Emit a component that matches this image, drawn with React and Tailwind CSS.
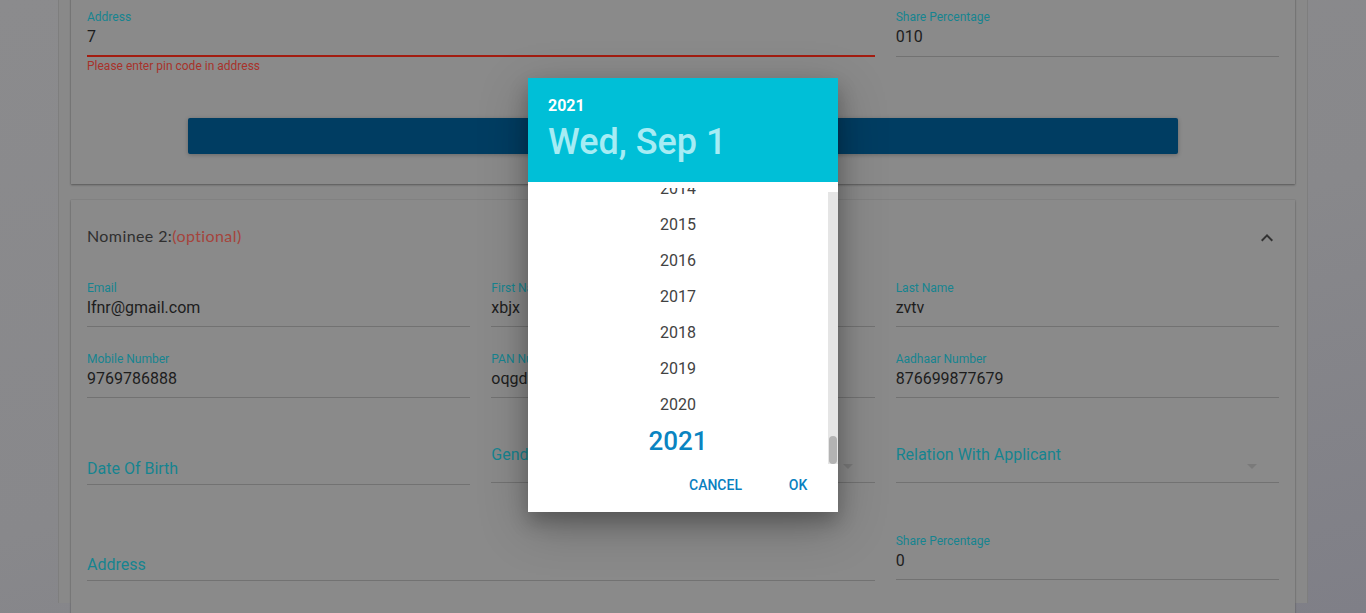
import React from "react";

const Field = ({ label, value, className = "" }) => (
  <div className={`border-b border-[#727272] pb-[6px] ${className}`}>
    <div className="text-[12px] leading-4 text-[#168490] whitespace-nowrap">{label}</div>
    <div className="text-[16px] leading-6 text-[#1d1d1d] whitespace-nowrap">{value}</div>
  </div>
);

const EmptyField = ({ label, className = "", top = "pt-[59px]" }) => (
  <div className={`border-b border-[#727272] pb-[3px] ${top} ${className}`}>
    <div className="text-[16px] leading-6 text-[#168490]">{label}</div>
  </div>
);

const SelectField = ({ label }) => (
  <div className="relative border-b border-[#727272] pt-[45px] pb-[15px]">
    <div className="text-[16px] leading-6 text-[#168490] whitespace-nowrap">{label}</div>
    <svg className="absolute right-[22px] bottom-[13px]" width="10" height="5" viewBox="0 0 10 5">
      <path d="M0 0l5 5 5-5z" fill="#7a7a7a" />
    </svg>
  </div>
);

const years = [2014, 2015, 2016, 2017, 2018, 2019, 2020, 2021];

const App = () => {
  return (
    <div className="relative h-[613px] w-full overflow-hidden font-['Roboto',sans-serif] bg-[linear-gradient(165deg,#8b8b8d_0%,#88888b_55%,#7f7f87_100%)]">
      {/* page panel */}
      <div className="mx-auto h-full w-[1250px] border-x border-[#7e7e7e] bg-[#898989] px-[12px]">
        {/* card 1 (scrolled) */}
        <div className="mt-[-10px] bg-[#8a8a8a] px-[16px] pt-[19px] pb-[30px] shadow-[0_1px_2px_rgba(0,0,0,0.35),0_0_1px_rgba(0,0,0,0.2)]">
          <div className="grid grid-cols-3 gap-x-[21px]">
            <div className="col-span-2">
              <div className="border-b-2 border-[#a31c10] pb-[6px]">
                <div className="text-[12px] leading-4 text-[#168490]">Address</div>
                <div className="text-[16px] leading-6 text-[#1d1d1d]">7</div>
              </div>
              <div className="mt-[1px] text-[12px] leading-4 text-[#a8322a]">Please enter pin code in address</div>
            </div>
            <div className="self-start border-b border-[#727272] pb-[7px]">
              <div className="text-[12px] leading-4 text-[#168490]">Share Percentage</div>
              <div className="text-[16px] leading-6 text-[#1d1d1d]">010</div>
            </div>
          </div>
          <button className="mx-auto mt-[44px] block h-[36px] w-[990px] rounded-[2px] bg-[#003d62] shadow-[0_1px_4px_rgba(0,0,0,0.25)]" />
        </div>

        {/* card 2 */}
        <div className="mt-[16px] bg-[#8a8a8a] px-[16px] pt-[24px] pb-[40px] shadow-[0_1px_2px_rgba(0,0,0,0.3),0_0_1px_rgba(0,0,0,0.2)]">
          <div className="flex h-6 items-center justify-between">
            <div className="font-['Lato',sans-serif] text-[16px] leading-6 tracking-[0.4px] text-[#2f2f2f]">
              Nominee 2:<span className="text-[#a5443c]">(optional)</span>
            </div>
            <svg className="mt-[4px]" width="24" height="24" viewBox="0 0 24 24">
              <path d="M7.41 15.41L12 10.83l4.59 4.58L18 14l-6-6-6 6z" fill="#333" />
            </svg>
          </div>

          <div className="mt-[32px] grid grid-cols-3 gap-x-[21px]">
            <Field label="Email" value="lfnr@gmail.com" />
            <Field label="First Name" value="xbjx" />
            <Field label="Last Name" value="zvtv" />
          </div>

          <div className="mt-[24px] grid grid-cols-3 gap-x-[21px]">
            <Field label="Mobile Number" value="9769786888" />
            <Field label="PAN Number" value="oqgdp4586k" />
            <Field label="Aadhaar Number" value="876699877679" />
          </div>

          <div className="grid grid-cols-3 items-start gap-x-[21px]">
            <EmptyField label="Date Of Birth" />
            <SelectField label="Gender" />
            <SelectField label="Relation With Applicant" />
          </div>

          <div className="grid grid-cols-3 items-start gap-x-[21px]">
            <EmptyField label="Address" className="col-span-2" top="pt-[68px]" />
            <Field label="Share Percentage" value="0" className="mt-[48px]" />
          </div>
        </div>
      </div>

      {/* date picker dialog */}
      <div className="absolute inset-0 flex justify-center pt-[78px]">
        <div className="flex h-[434px] w-[310px] flex-col bg-white shadow-[0_14px_45px_rgba(0,0,0,0.25),0_10px_18px_rgba(0,0,0,0.22)]">
          <div className="h-[104px] bg-[#00bfd7] px-[20px] pt-[16px]">
            <div className="text-[16px] font-bold leading-6 text-white">2021</div>
            <div className="mt-[2px] text-[36px] font-medium leading-[44px] text-[#a6ecf4]">Wed, Sep 1</div>
          </div>
          <div className="flex h-[285px]">
            <div className="flex-1 pt-[6px]">
              <div className="h-full overflow-hidden">
                <div className="mt-[-17px]">
                  {years.map((y) =>
                    y === 2021 ? (
                      <div key={y} className="flex h-9 items-center justify-center text-[26px] font-medium text-[#0a84c1]">
                        {y}
                      </div>
                    ) : (
                      <div key={y} className="flex h-9 items-center justify-center text-[16px] text-[#424242]">
                        {y}
                      </div>
                    )
                  )}
                </div>
              </div>
            </div>
            <div className="mt-[10px] mb-[3px] flex w-[10px] flex-col justify-end bg-[#e5e5e5]">
              <div className="mx-[1px] h-[28px] rounded-[4px] bg-[#b3b3b3]" />
            </div>
          </div>
          <div className="flex justify-end gap-2 pr-2">
            <button className="h-9 w-[85px] text-[14px] font-medium uppercase text-[#0a80bf]">Cancel</button>
            <button className="h-9 w-[64px] text-[14px] font-medium uppercase text-[#0a80bf]">OK</button>
          </div>
        </div>
      </div>
    </div>
  );
};

export default App;
